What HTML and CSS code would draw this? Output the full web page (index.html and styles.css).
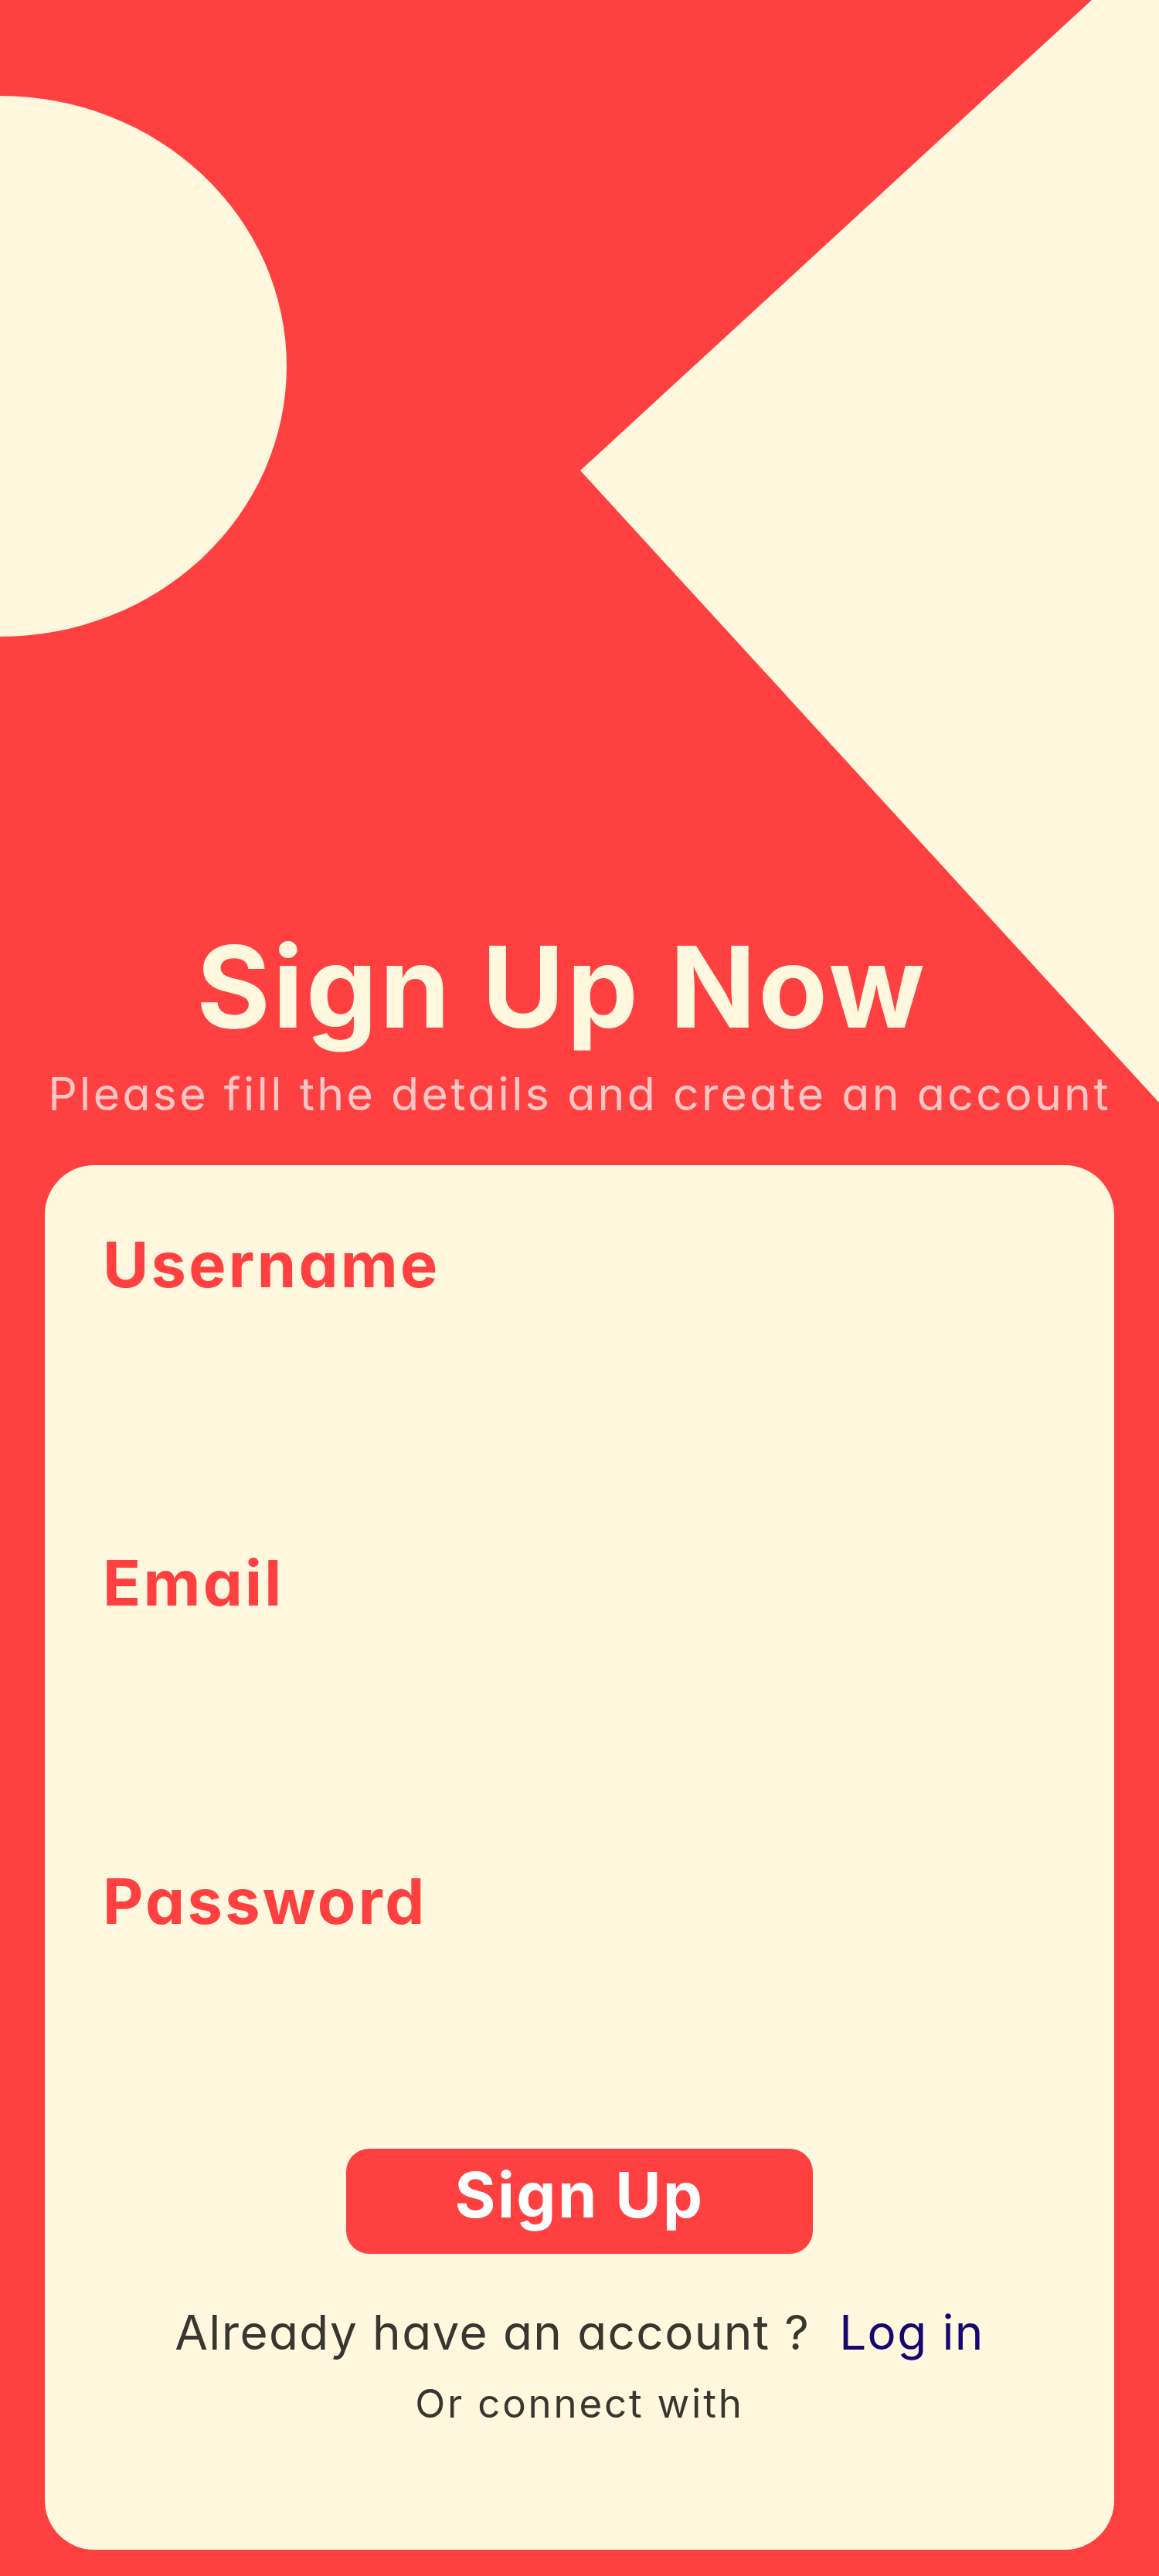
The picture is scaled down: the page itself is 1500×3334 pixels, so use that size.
FILE: index.html
```html
<!DOCTYPE html>
<html lang="en">
<head>
<meta charset="utf-8">
<title>Sign Up</title>
<link rel="stylesheet" href="styles.css">
</head>
<body>
<div class="page">
  <svg class="decor" width="1500" height="1500" viewBox="0 0 1500 1500" aria-hidden="true">
    <ellipse cx="0" cy="474" rx="371" ry="350" fill="#fff7de"/>
    <polygon points="1413,0 1500,0 1500,1427 751,609" fill="#fff7de"/>
  </svg>
  <header class="hero">
    <h1 class="title">Sign Up Now</h1>
    <p class="subtitle">Please fill the details and create an account</p>
  </header>
  <main class="card">
    <form class="form">
      <div class="field">
        <label class="label" for="username">Username</label>
        <input class="input" id="username" type="text">
      </div>
      <div class="field">
        <label class="label" for="email">Email</label>
        <input class="input" id="email" type="email">
      </div>
      <div class="field">
        <label class="label" for="password">Password</label>
        <input class="input" id="password" type="password">
      </div>
      <button class="btn" type="button">Sign Up</button>
    </form>
    <p class="already">Already have an account ?&nbsp; <a class="login" href="#">Log in</a></p>
    <p class="connect">Or connect with</p>
  </main>
</div>
</body>
</html>
```
FILE: styles.css
```css
* { box-sizing: border-box; }
html, body { margin: 0; padding: 0; }
body {
  background: #ff4040;
  font-family: Inter, "Noto Sans", sans-serif;
  font-feature-settings: "cv11";
}
.page {
  position: relative;
  width: 1500px;
  min-height: 3334px;
  overflow: hidden;
  padding-top: 1204px;
  padding-bottom: 34px;
}
.decor {
  position: absolute;
  left: 0;
  top: 0;
}
.hero {
  position: relative;
  text-align: center;
}
.title {
  margin: 0;
  padding-right: 46px;
  font-size: 146px;
  line-height: 146px;
  font-weight: 700;
  color: #fff7de;
  letter-spacing: 3.3px;
}
.subtitle {
  margin: 36px 0 0;
  font-size: 59px;
  line-height: 59px;
  font-weight: 400;
  color: #ffc6c6;
  letter-spacing: 3.3px;
}
.card {
  position: relative;
  margin: 63px 58px 0;
  background: #fff7de;
  border-radius: 64px;
  padding: 89px 0 164px;
}
.form {
  display: flex;
  flex-direction: column;
  gap: 52px;
  padding: 0 75px;
}
.field {
  display: flex;
  flex-direction: column;
}
.label {
  font-size: 81px;
  line-height: 81px;
  font-weight: 700;
  color: #ff4040;
  letter-spacing: 3.3px;
}
.input {
  height: 279px;
  border: none;
  background: transparent;
  outline: none;
  font: inherit;
}
.btn {
  align-self: center;
  width: 604px;
  height: 136px;
  margin-top: -52px;
  border: none;
  border-radius: 30px;
  background: #ff4040;
  color: #ffffff;
  font-family: inherit;
  font-size: 81px;
  line-height: 81px;
  font-weight: 700;
  letter-spacing: 2.4px;
  padding: 20px 0 35px;
}
.already {
  margin: 71px 0 0;
  text-align: center;
  font-size: 62px;
  line-height: 62px;
  color: #38362f;
  letter-spacing: 1.4px;
}
.login {
  color: #150870;
  text-decoration: none;
}
.connect {
  margin: 35px 0 0;
  text-align: center;
  font-size: 51px;
  line-height: 51px;
  color: #38362f;
  letter-spacing: 2.8px;
}
```
